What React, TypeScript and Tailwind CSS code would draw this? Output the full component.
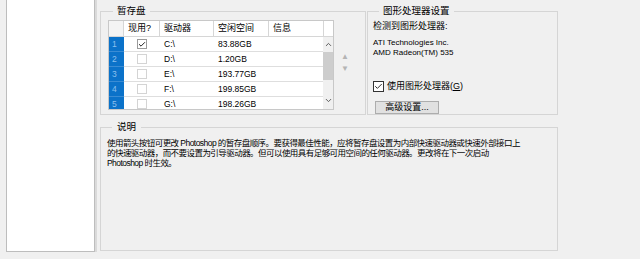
import { Check, ChevronUp, ChevronDown } from "lucide-react"

const font = "font-['Liberation_Sans','Noto_Sans_CJK_SC',sans-serif]"

const drives = [
    { n: 1, on: true, drive: "C:\\", free: "83.88GB" },
    { n: 2, on: false, drive: "D:\\", free: "1.20GB" },
    { n: 3, on: false, drive: "E:\\", free: "193.77GB" },
    { n: 4, on: false, drive: "F:\\", free: "199.85GB" },
    { n: 5, on: false, drive: "G:\\", free: "198.26GB" },
]

function Box({ checked }: { checked: boolean }) {
    return (
        <div
            className={`w-[10px] h-[10px] bg-white border flex items-center justify-center ${checked ? "border-[#9a9a9a]" : "border-[#d4d4d4]"}`}
        >
            {checked && <Check className="w-[9px] h-[9px] text-[#222]" strokeWidth={3} />}
        </div>
    )
}

export default function App() {
    return (
        <div className={`w-[640px] h-[259px] bg-[#f0f0f0] flex overflow-hidden text-black ${font}`}>
            {/* left list */}
            <div className="ml-[6px] w-[89px] h-[252px] bg-white border-x border-b border-[#bdbdbd] shadow-[2px_0_0_#dadada]" />

            <div className="ml-[5px] w-[458px] flex flex-col">
                <div className="flex gap-[1px] pt-[5px]">
                    {/* 暂存盘 */}
                    <fieldset className="w-[266px] h-[110px] border border-[#d5d5d5] px-[7px]">
                        <legend className="ml-[5px] px-[4px] text-[9.5px] leading-[12px]">暂存盘</legend>
                        <div className="flex mt-[3px] items-start">
                            <div className="w-[226px] h-[90px] border border-[#c8c8c8] bg-white flex flex-col overflow-hidden">
                                <div className="flex h-[16px] shrink-0 border-b border-[#d6d6d6] text-[9px] leading-[15px]">
                                    <div className="w-[15px] border-r border-[#d6d6d6] bg-[#f4f4f4]" />
                                    <div className="w-[36px] border-r border-[#d6d6d6] pl-[4px]">现用?</div>
                                    <div className="w-[54px] border-r border-[#d6d6d6] pl-[4px]">驱动器</div>
                                    <div className="w-[55px] border-r border-[#d6d6d6] pl-[4px]">空闲空间</div>
                                    <div className="w-[55px] border-r border-[#d6d6d6] pl-[4px]">信息</div>
                                </div>
                                <div className="flex flex-1">
                                    <div className="w-[214px] flex flex-col">
                                        {drives.map((d) => (
                                            <div key={d.n} className="flex h-[15px] shrink-0 text-[8.5px] leading-[14px]">
                                                <div className="w-[15px] bg-[#0b72c9] text-[#8cc0ee] pl-[3px] border-b border-[#3a8cd4]">
                                                    {d.n}
                                                </div>
                                                <div className="w-[36px] flex items-center justify-center border-b border-[#dedede]">
                                                    <Box checked={d.on} />
                                                </div>
                                                <div className="w-[54px] pl-[4px] border-b border-[#dedede]">{d.drive}</div>
                                                <div className="w-[55px] pl-[4px] border-b border-[#dedede]">{d.free}</div>
                                                <div className="flex-1 border-b border-[#dedede]" />
                                            </div>
                                        ))}
                                    </div>
                                    <div className="w-[10px] bg-[#f0f0f0] flex flex-col items-center">
                                        <ChevronUp className="w-[9px] h-[9px] mt-[3px] text-[#555]" strokeWidth={2.5} />
                                        <div className="w-[10px] h-[28px] mt-[3px] bg-[#cdcdcd]" />
                                        <ChevronDown className="w-[9px] h-[9px] mt-[16px] text-[#555]" strokeWidth={2.5} />
                                    </div>
                                </div>
                            </div>
                            <div className="ml-[7px] mt-[32px] flex flex-col items-center gap-[3px] text-[#b4b4b4] text-[8px] leading-[9px]">
                                <span>▲</span>
                                <span>▼</span>
                            </div>
                        </div>
                    </fieldset>

                    {/* 图形处理器设置 */}
                    <fieldset className="w-[191px] h-[110px] border border-[#d5d5d5] px-[5px]">
                        <legend className="ml-[6px] px-[4px] text-[9.5px] leading-[12px]">图形处理器设置</legend>
                        <div className="mt-[4px] text-[9px] leading-[11px]">检测到图形处理器:</div>
                        <div className="mt-[6px] text-[8px] leading-[9.5px]">
                            ATI Technologies Inc.
                            <br />
                            AMD Radeon(TM) 535
                        </div>
                        <div className="mt-[23px] h-[13px] flex items-center gap-[3px] text-[9px]">
                            <div className="w-[11px] h-[11px] bg-white border border-[#333] flex items-center justify-center">
                                <Check className="w-[9px] h-[9px] text-[#222]" strokeWidth={2.5} />
                            </div>
                            <span>
                                使用图形处理器(<span className="underline">G</span>)
                            </span>
                        </div>
                        <button className="mt-[3px] ml-[2px] w-[64px] h-[13px] bg-[#e1e1e1] border border-[#adadad] text-[9px] leading-[11px] text-center">
                            高级设置...
                        </button>
                    </fieldset>
                </div>

                {/* 说明 */}
                <fieldset className="mt-[6px] w-[458px] h-[130px] border border-[#d5d5d5] px-[6px]">
                    <legend className="ml-[5px] px-[5px] text-[9.5px] leading-[12px]">说明</legend>
                    <p className="pt-[5px] text-[8.5px] leading-[10px] tracking-[-0.55px] whitespace-nowrap">
                        使用箭头按钮可更改 Photoshop 的暂存盘顺序。要获得最佳性能，应将暂存盘设置为内部快速驱动器或快速外部接口上
                        <br />
                        的快速驱动器，而不要设置为引导驱动器。但可以使用具有足够可用空间的任何驱动器。更改将在下一次启动
                        <br />
                        Photoshop 时生效。
                    </p>
                </fieldset>
            </div>
        </div>
    )
}
